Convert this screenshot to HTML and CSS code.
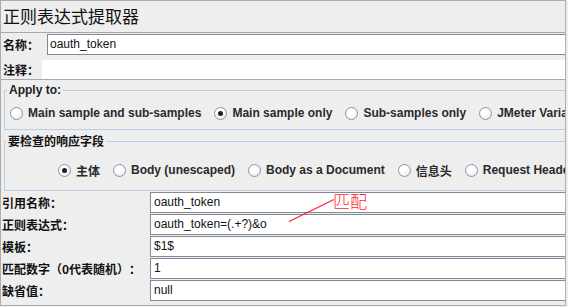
FILE: index.html
```html
<!DOCTYPE html>
<html lang="zh-CN">
<head>
    <meta charset="UTF-8">
    <meta name="viewport" content="width=device-width, initial-scale=1.0">
    <title>正则表达式提取器</title>
    <link rel="stylesheet" href="styles.css">
</head>
<body>
    <div class="panel">
        <div class="title">正则表达式提取器</div>

        <div class="name-row">
            <span class="label">名称：</span>
            <div class="field">oauth_token</div>
        </div>

        <div class="comment-row">
            <span class="label label-comment">注释：</span>
            <div class="comment-field"></div>
        </div>

        <fieldset class="group group-apply">
            <legend>Apply to:</legend>
            <div class="options">
                <label class="option"><span class="radio"></span>Main sample and sub-samples</label>
                <label class="option"><span class="radio checked"></span>Main sample only</label>
                <label class="option"><span class="radio"></span>Sub-samples only</label>
                <label class="option"><span class="radio"></span>JMeter Variable</label>
            </div>
        </fieldset>

        <fieldset class="group group-field">
            <legend>要检查的响应字段</legend>
            <div class="options">
                <label class="option"><span class="radio checked"></span>主体</label>
                <label class="option"><span class="radio"></span>Body (unescaped)</label>
                <label class="option"><span class="radio"></span>Body as a Document</label>
                <label class="option"><span class="radio"></span>信息头</label>
                <label class="option"><span class="radio"></span>Request Headers</label>
            </div>
        </fieldset>

        <div class="props">
            <div class="prop"><span class="prop-label">引用名称：</span><div class="prop-field">oauth_token</div></div>
            <div class="prop"><span class="prop-label">正则表达式：</span><div class="prop-field">oauth_token=(.+?)&amp;o</div></div>
            <div class="prop"><span class="prop-label">模板：</span><div class="prop-field">$1$</div></div>
            <div class="prop"><span class="prop-label">匹配数字（0代表随机）：</span><div class="prop-field">1</div></div>
            <div class="prop"><span class="prop-label">缺省值：</span><div class="prop-field">null</div></div>
        </div>

        <!-- hand-drawn annotation -->
        <svg class="note-line" width="48" height="25" viewBox="0 0 48 25">
            <line x1="1" y1="23.5" x2="46" y2="1.5" stroke="#ff1f2f" stroke-width="1.3"/>
        </svg>
        <div class="note">匹配</div>
    </div>
</body>
</html>
```

FILE: styles.css
```css
body {
    margin: 0;
    background-color: #eeeeee;
    font-family: "Liberation Sans", "Noto Sans CJK SC", sans-serif;
    font-size: 12px;
    color: #222;
    text-spacing-trim: space-all;
}
.panel {
    position: relative;
    width: 566px;
    height: 306px;
    box-sizing: border-box;
    border: 1px solid #adadad;
    overflow: hidden;
    background-color: #eeeeee;
}
.title {
    height: 31px;
    line-height: 30px;
    padding-left: 2px;
    font-family: "Noto Sans CJK SC", sans-serif;
    font-size: 17px;
    color: #111;
}
.label {
    width: 44px;
    flex: none;
    font-family: "Noto Sans CJK SC", sans-serif;
    font-weight: bold;
    color: #111;
}
.label-comment {
    width: 39px;
}
.name-row {
    display: flex;
    align-items: center;
    border-top: 1px solid #a8a8a8;
    padding: 1px 0 0 2px;
    height: 21px;
}
.field, .prop-field {
    flex: 1;
    height: 21px;
    box-sizing: border-box;
    border: 1px solid #7f8b98;
    border-right: none;
    background-color: #fff;
    line-height: 19px;
    color: #111;
    white-space: nowrap;
}
.field {
    padding-left: 2px;
}
.comment-row {
    display: flex;
    align-items: center;
    padding: 5px 0 0 2px;
    height: 19px;
    border-bottom: 1px solid #a8a8a8;
}
.comment-field {
    flex: 1;
    height: 19px;
    background-color: #fff;
}
.group {
    width: 700px;
    margin: 0 0 0 3px;
    padding: 0;
    border: 1px solid #b8cfe5;
}
.group legend {
    padding: 0 2px;
    line-height: 14px;
    font-weight: bold;
    color: #222;
}
.group-apply {
    margin-top: 3px;
}
.group-apply legend {
    margin-left: 2px;
}
.group-field {
    margin-top: 4px;
}
.group-field legend {
    margin-left: 1px;
    font-family: "Noto Sans CJK SC", sans-serif;
    color: #111;
}
.options {
    display: flex;
    align-items: center;
    gap: 13px;
    height: 20px;
    white-space: nowrap;
}
.group-apply .options {
    padding: 6px 0 6px 5px;
}
.group-field .options {
    padding: 12px 0 10px 53px;
}
.option {
    display: flex;
    align-items: center;
    font-weight: bold;
    color: #2a2a2a;
}
.radio {
    width: 11px;
    height: 11px;
    margin-right: 5px;
    border: 1px solid #8a96a3;
    border-radius: 50%;
    background: radial-gradient(circle at 40% 35%, #ffffff 30%, #dfe4ea 100%);
    display: flex;
    align-items: center;
    justify-content: center;
}
.radio.checked::after {
    content: "";
    width: 5px;
    height: 5px;
    border-radius: 50%;
    background-color: #1e1e1e;
}
.props {
    margin-top: 1px;
}
.prop {
    display: flex;
    align-items: center;
    height: 21px;
    margin-bottom: 1px;
}
.prop-label {
    width: 149px;
    flex: none;
    box-sizing: border-box;
    padding-left: 1px;
    font-family: "Noto Sans CJK SC", sans-serif;
    font-weight: bold;
    color: #111;
    white-space: nowrap;
}
.prop-field {
    padding-left: 3px;
}
.note {
    position: absolute;
    left: 332px;
    top: 191px;
    font-family: "Noto Sans CJK SC", sans-serif;
    font-size: 17px;
    font-weight: 300;
    line-height: 17px;
    color: #ff1f2f;
}
.note-line {
    position: absolute;
    left: 287px;
    top: 197px;
}
```
